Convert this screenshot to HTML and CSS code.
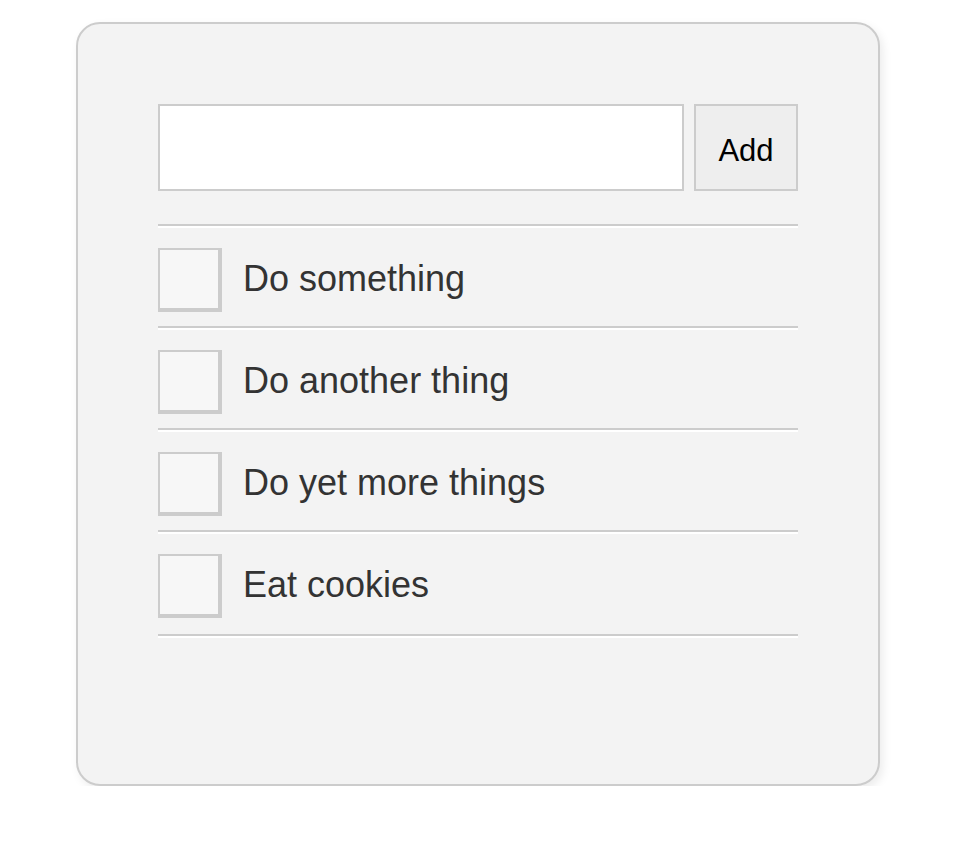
FILE: index.html
```html
<!DOCTYPE html>
<html>
<head>
<meta charset="utf-8">
<link rel="stylesheet" href="styles.css">
</head>
<body>
<div class="card">
  <form class="add-form">
    <input class="add-input" type="text">
    <button class="add-btn" type="button">Add</button>
  </form>
  <ul class="todo-list">
    <li class="todo"><span class="check"></span><span class="label">Do something</span></li>
    <li class="todo"><span class="check"></span><span class="label">Do another thing</span></li>
    <li class="todo"><span class="check"></span><span class="label">Do yet more things</span></li>
    <li class="todo todo-last"><span class="check"></span><span class="label">Eat cookies</span></li>
  </ul>
</div>
</body>
</html>
```
FILE: styles.css
```css
* { box-sizing: border-box; }
html, body { margin: 0; padding: 0; background: #fff; }
body {
  font-family: "Liberation Sans", Helvetica, Arial, sans-serif;
  color: #333;
}
.card {
  margin: 22px 0 0 76px;
  width: 804px;
  height: 764px;
  padding: 80px;
  border: 2px solid #cccccc;
  border-radius: 24px;
  background: #f3f3f3;
  box-shadow: 3px 4px 10px rgba(0, 0, 0, 0.08);
}
.add-form {
  display: flex;
  gap: 10px;
  margin: 0 0 33px 0;
}
.add-input {
  width: 526px;
  height: 87px;
  border: 2px solid #cccccc;
  background: #fff;
  margin: 0;
  padding: 0 12px;
  font: inherit;
  font-size: 31px;
  outline: none;
}
.add-btn {
  width: 104px;
  height: 87px;
  border: 2px solid #cccccc;
  background: #eeeeee;
  margin: 0;
  padding: 6px 0 0 0;
  color: #000;
  font-family: "Liberation Sans", Helvetica, Arial, sans-serif;
  font-size: 31px;
}
.todo-list {
  list-style: none;
  margin: 0;
  padding: 0;
  border-top: 2px solid #cccccc;
  border-bottom: 2px solid #ffffff;
}
.todo {
  display: flex;
  align-items: flex-start;
  gap: 21px;
  padding: 20px 0 14px 0;
  border-top: 2px solid #ffffff;
  border-bottom: 2px solid #cccccc;
}
.todo-last {
  padding-bottom: 16px;
}
.check {
  display: block;
  width: 64px;
  height: 64px;
  flex: none;
  background: #f7f7f7;
  border: 2px solid #cccccc;
  border-right-width: 4px;
  border-bottom-width: 4px;
}
.label {
  display: block;
  margin-top: 11px;
  font-size: 36px;
  line-height: 40px;
  color: #333;
}
```
